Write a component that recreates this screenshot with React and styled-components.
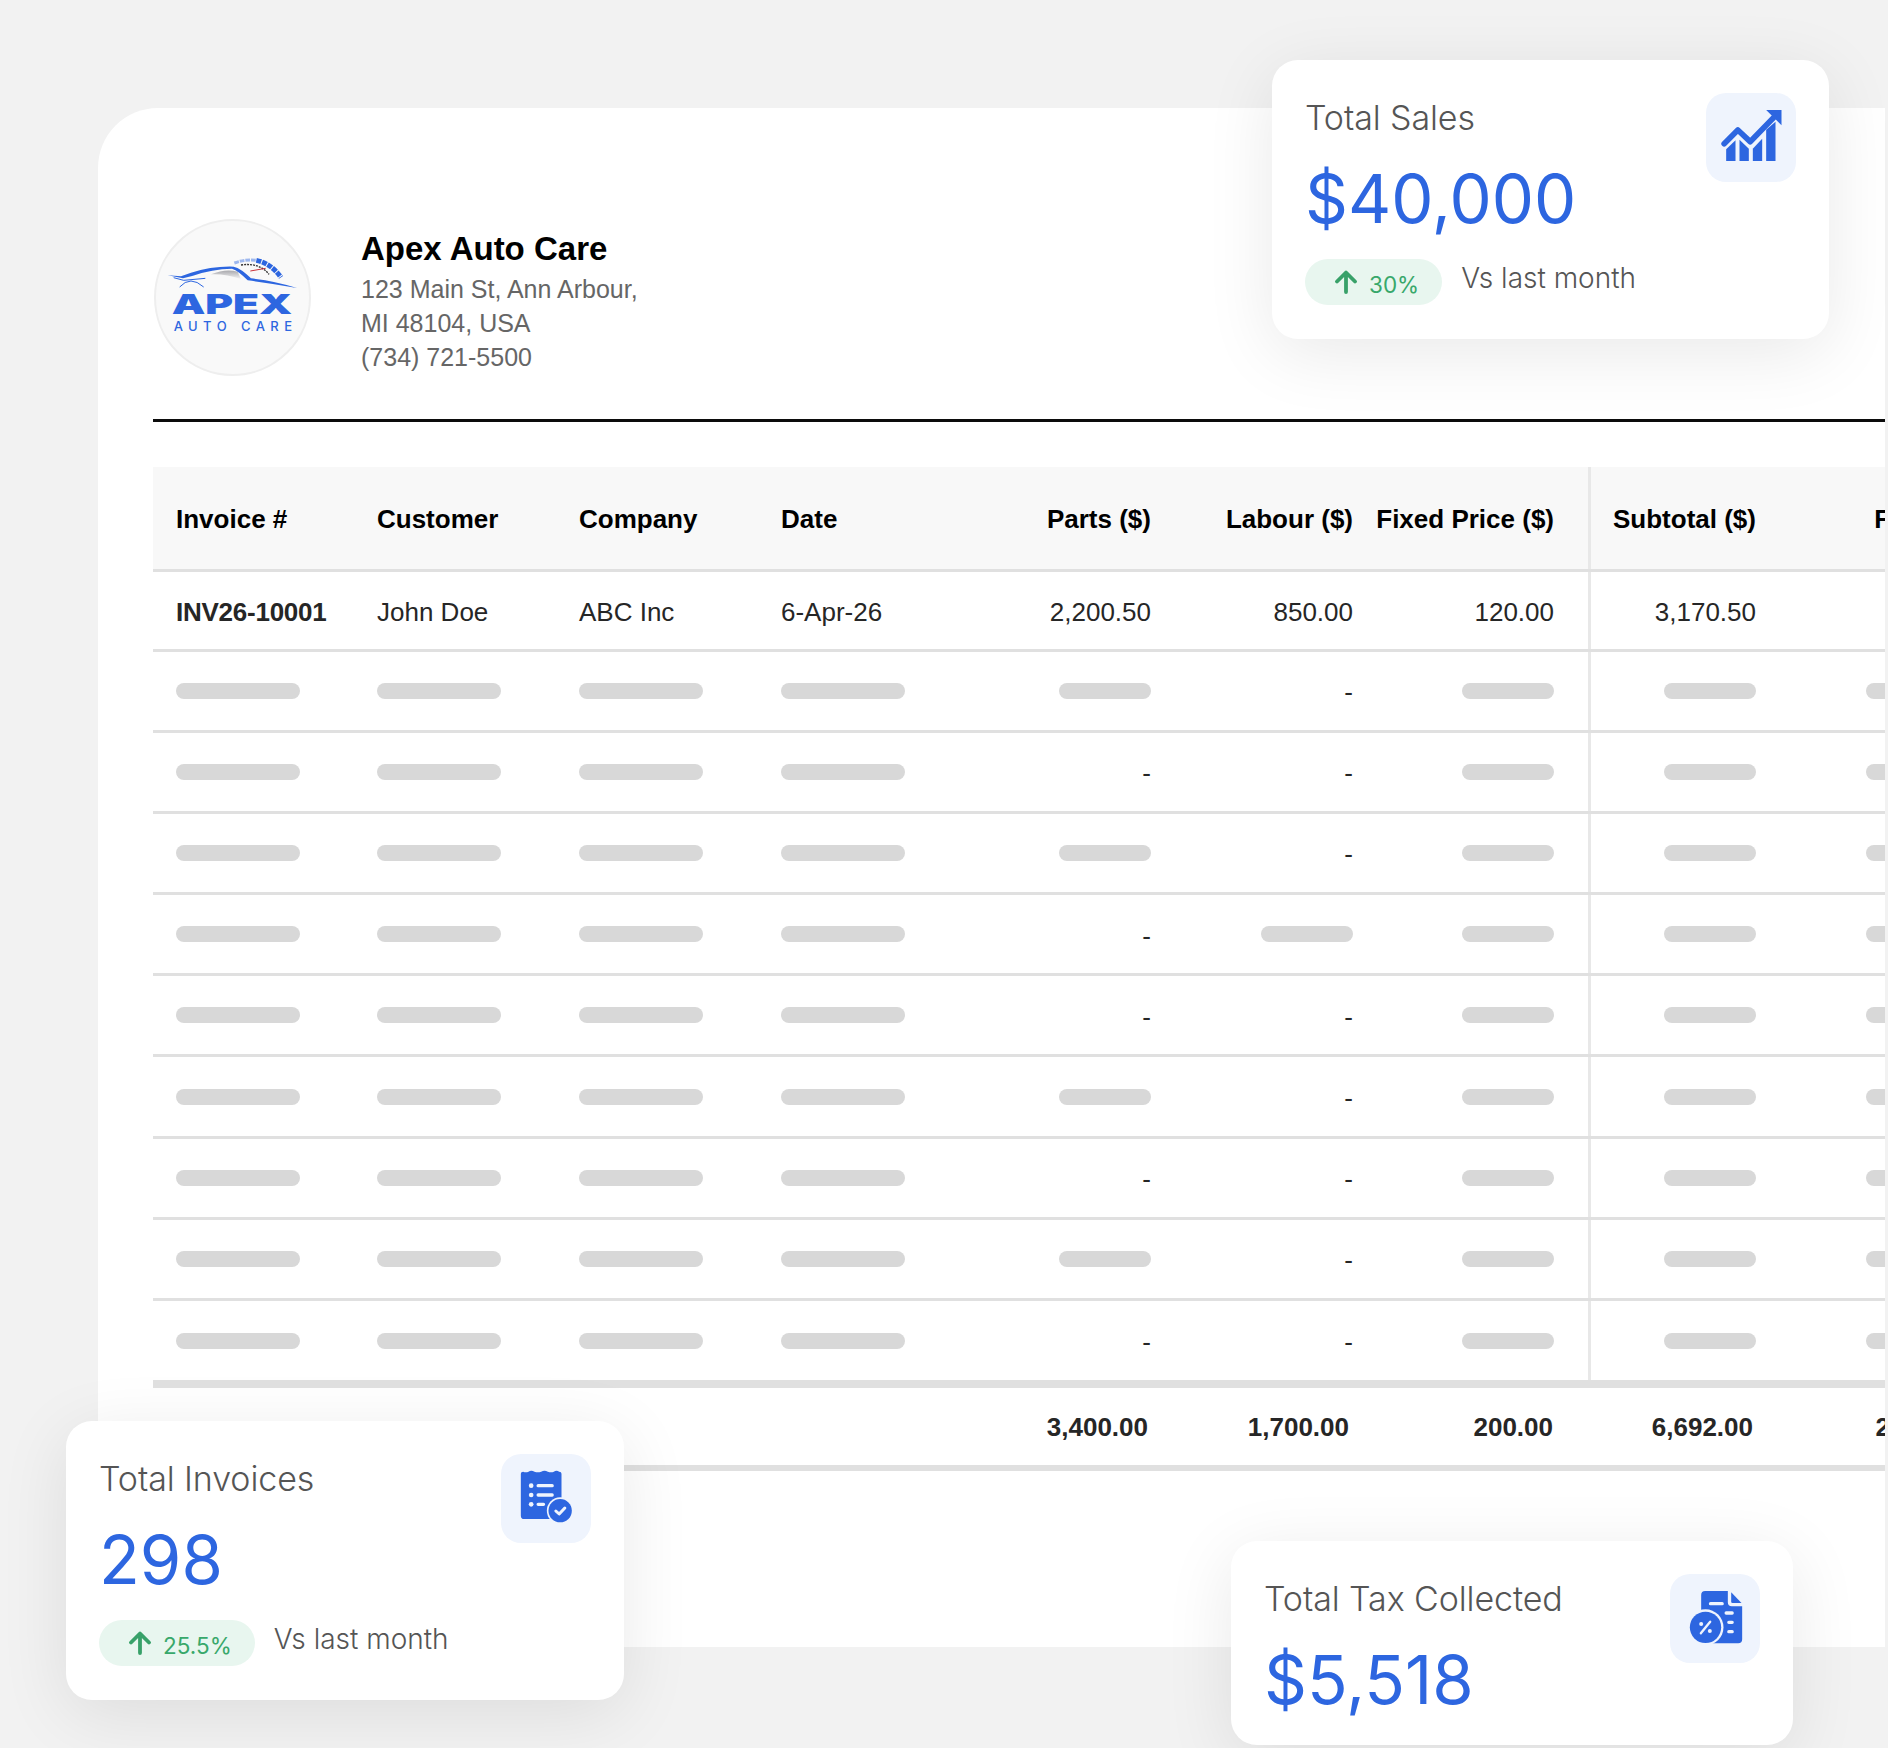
import React from "react";
import styled, { createGlobalStyle } from "styled-components";

const GlobalStyle = createGlobalStyle`
  html, body { margin: 0; padding: 0; background: #f2f2f2; }
  * { box-sizing: border-box; }
`;

const Stage = styled.div`
  position: relative;
  width: 1888px;
  height: 1748px;
  padding: 108px 3px 101px 98px;
  background: #f2f2f2;
  overflow: hidden;
  font-family: "Liberation Sans", Arial, sans-serif;
`;

const Panel = styled.main`
  height: 100%;
  padding: 111px 0 0 55px;
  background: #fff;
  border-radius: 60px 0 0 60px;
  overflow: hidden;
`;

const Header = styled.header`
  display: flex;
  align-items: flex-start;
  gap: 50px;
  height: 203px;
  border-bottom: 3px solid #0c0c0c;
`;

const LogoCircle = styled.div`
  width: 157px;
  height: 157px;
  flex-shrink: 0;
  margin-left: 1px;
  border: 2px solid #eeeeee;
  border-radius: 50%;
  background: #f9f9f9;
  overflow: hidden;

  svg { display: block; width: 100%; height: 100%; }
`;

const Shop = styled.div`
  padding-top: 10px;
`;

const ShopName = styled.h1`
  margin: 0 0 3px;
  font-size: 33px;
  line-height: 40px;
  font-weight: 700;
  color: #000;
`;

const ShopLine = styled.div`
  font-size: 25px;
  line-height: 34px;
  color: #666;
`;

const Table = styled.section`
  width: 1840px;
  margin-top: 45px;
`;

const Row = styled.div`
  display: grid;
  grid-template-columns: 201px 202px 202px 202px 226px 201px 201px 203px 202px;
  height: ${(p) => p.$height}px;
  border-bottom: ${(p) => p.$rule}px solid #e0e0e0;
  background: ${(p) => (p.$head ? "#f8f8f8" : "#fff")};
`;

const Cell = styled.div`
  display: flex;
  align-items: center;
  justify-content: ${(p) => (p.$right ? "flex-end" : "flex-start")};
  padding: ${(p) => p.$nudge ?? 0}px ${(p) => (p.$right ? p.$pad ?? 35 : 0)}px 0 ${(p) => (p.$right ? 0 : 23)}px;
  border-left: ${(p) => (p.$split ? "3px solid #e8e8e8" : "none")};
  font-size: 26px;
  font-weight: ${(p) => (p.$bold ? 700 : 400)};
  color: ${(p) => (p.$black ? "#000" : "#262626")};
  white-space: nowrap;
`;

const InvoiceNo = styled.span`
  letter-spacing: -0.25px;
`;

const Skeleton = styled.span`
  display: block;
  width: ${(p) => p.$width}px;
  height: 16px;
  border-radius: 8px;
  background: #d8d8d8;
`;

const Dash = styled.span`
  margin-top: 4px;
`;

const StatCard = styled.aside`
  position: absolute;
  left: ${(p) => p.$x}px;
  top: ${(p) => p.$y}px;
  width: ${(p) => p.$w}px;
  height: ${(p) => p.$h}px;
  padding: 33px;
  display: flex;
  justify-content: space-between;
  align-items: flex-start;
  background: #fff;
  border-radius: 26px;
  box-shadow: 0 14px 70px rgba(0, 0, 0, 0.09);
  overflow: hidden;
  font-family: Inter, "Liberation Sans", sans-serif;
`;

const StatTitle = styled.div`
  font-size: 34px;
  line-height: 50px;
  font-weight: 300;
  letter-spacing: -0.1px;
  color: #555;
`;

const StatValue = styled.div`
  margin-top: 16px;
  font-size: 67px;
  line-height: 80px;
  font-weight: 400;
  color: #2d66e0;
`;

const Trend = styled.div`
  display: flex;
  align-items: flex-start;
  gap: 19px;
  margin-top: 20px;
`;

const Pill = styled.span`
  display: flex;
  align-items: center;
  gap: 11px;
  height: 46px;
  padding: 4px 23px 0 29px;
  border-radius: 23px;
  background: #e8f6ef;
  font-size: 22.5px;
  color: #38a86b;

  svg { width: 24px; height: 24px; margin-top: -4px; }
`;

const Versus = styled.span`
  font-size: 28px;
  line-height: 38px;
  font-weight: 300;
  color: #555;
`;

const IconBox = styled.div`
  width: 90px;
  height: 89px;
  flex-shrink: 0;
  border-radius: 20px;
  background: #eff4fd;

  svg { display: block; width: 100%; height: 100%; }
`;

const BLUE = "#2d66e0";
const TINT = "#eff4fd";

const ApexLogo = () => (
  <svg viewBox="17 18 459 459">
    <defs>
      <linearGradient id="roofShade" x1="0" y1="0" x2="0" y2="1">
        <stop offset="0" stopColor="#a9a9ad" />
        <stop offset="1" stopColor="#f4f4f5" />
      </linearGradient>
    </defs>
    <path d="M182 178 Q225 160 262 170 L272 192 Q225 176 182 178Z" fill="url(#roofShade)" />
    <path
      d="M52 181 L92 184 L122 173 Q185 153 250 155 Q272 160 302 190 Q375 198 440 219 Q370 206 292 196 Q265 168 245 161 Q185 162 128 182 L98 190 Z"
      fill={BLUE}
    />
    <path d="M70 188 L100 196 L165 190" fill="none" stroke={BLUE} strokeWidth="3" />
    <path d="M88 216 Q120 180 160 216" fill="none" stroke={BLUE} strokeWidth="3" />
    <path d="M252 144 Q285 132 318 136" fill="none" stroke={BLUE} strokeOpacity="0.45" strokeWidth="9" strokeDasharray="14 3" />
    <path d="M318 136 Q362 145 392 187" fill="none" stroke={BLUE} strokeWidth="15" strokeDasharray="15 3" />
    <path d="M272 150 Q328 142 356 178" fill="none" stroke="#333" strokeWidth="4" strokeDasharray="6 3" />
    <path d="M300 168 L346 160" stroke="#c8323a" strokeWidth="3" />
    <text
      x="64"
      y="296"
      textLength="362"
      lengthAdjust="spacingAndGlyphs"
      fontFamily="Inter, sans-serif"
      fontWeight="900"
      fontSize="82"
      fill={BLUE}
    >
      APEX
    </text>
    <text
      x="70"
      y="347"
      textLength="355"
      fontFamily="Inter, sans-serif"
      fontWeight="500"
      fontSize="39"
      fill={BLUE}
    >
      AUTO CARE
    </text>
  </svg>
);

const ChartIcon = () => (
  <svg viewBox="51 24 267 267">
    <g fill={BLUE}>
      <path d="M110 228V193L138 166V228Z" />
      <path d="M150 228V164L178 191V228Z" />
      <path d="M190 228V191L218 161V228Z" />
      <path d="M230 228V134L258 110V228Z" />
      <path d="M230 75H276V121Z" />
    </g>
    <path d="M104 176L145 135L182 170L252 98" fill="none" stroke={BLUE} strokeWidth="17" strokeLinecap="round" strokeLinejoin="round" />
  </svg>
);

const InvoiceIcon = () => (
  <svg viewBox="35 25 267 267">
    <path
      d="M93 84Q93 78 100 78Q108 82 116 78Q124 72 134 78Q144 82 154 78Q164 72 174 78Q184 82 192 78Q200 72 208 78Q215 78 215 84V210Q215 220 205 220H103Q93 220 93 210Z"
      fill={BLUE}
    />
    <g fill="none" stroke={TINT} strokeWidth="10" strokeLinecap="round">
      <path d="M145 120H187M145 148H187M145 176H161" />
    </g>
    <g fill={TINT}>
      <circle cx="124" cy="120" r="7" />
      <circle cx="124" cy="148" r="7" />
      <circle cx="124" cy="176" r="7" />
      <circle cx="211" cy="195" r="40" />
    </g>
    <circle cx="211" cy="195" r="35" fill={BLUE} />
    <path d="M198 196L208 205L225 187" fill="none" stroke={TINT} strokeWidth="9" strokeLinecap="round" strokeLinejoin="round" />
  </svg>
);

const TaxIcon = () => (
  <svg viewBox="30 27 267 267">
    <path d="M134 78H202V112Q202 124 214 124H245V223Q245 235 233 235H134Q122 235 122 223V90Q122 78 134 78Z" fill={BLUE} />
    <path d="M212 82L243 114H216Q212 114 212 110Z" fill={BLUE} />
    <path d="M150 116H185M197 144H215M205 172H215M205 200H215" fill="none" stroke={TINT} strokeWidth="10" strokeLinecap="round" />
    <circle cx="135" cy="187" r="54" fill={TINT} />
    <circle cx="135" cy="187" r="47" fill={BLUE} />
    <path d="M121 205L149 170" stroke={TINT} strokeWidth="7" strokeLinecap="round" />
    <circle cx="122" cy="177" r="6" fill={TINT} />
    <circle cx="148" cy="198" r="6" fill={TINT} />
  </svg>
);

const ArrowUp = () => (
  <svg viewBox="0 0 24 24" fill="none" stroke="#38a169" strokeWidth="3.8" strokeLinecap="round" strokeLinejoin="round">
    <path d="M12 22V3M3 11.5L12 2.5L21 11.5" />
  </svg>
);

const columns = [
  { label: "Invoice #" },
  { label: "Customer" },
  { label: "Company" },
  { label: "Date" },
  { label: "Parts ($)", right: true },
  { label: "Labour ($)", right: true, pad: 34 },
  { label: "Fixed Price ($)", right: true, pad: 34 },
  { label: "Subtotal ($)", right: true, split: true },
  { label: "Fee ($)", right: true },
];

const firstRow = [<InvoiceNo>INV26-10001</InvoiceNo>, "John Doe", "ABC Inc", "6-Apr-26", "2,200.50", "850.00", "120.00", "3,170.50", ""];

// which of parts / labour hold a value, the rest show a dash
const hiddenRows = [
  [true, false],
  [false, false],
  [true, false],
  [false, true],
  [false, false],
  [true, false],
  [false, false],
  [true, false],
  [false, false],
];

const totals = [
  { value: "3,400.00", pad: 38 },
  { value: "1,700.00", pad: 38 },
  { value: "200.00", pad: 35 },
  { value: "6,692.00", pad: 38 },
  { value: "264.00", pad: 38 },
];

const Stat = ({ x, y, w, h, title, value, change, icon }) => (
  <StatCard $x={x} $y={y} $w={w} $h={h}>
    <div>
      <StatTitle>{title}</StatTitle>
      <StatValue>{value}</StatValue>
      {change && (
        <Trend>
          <Pill>
            <ArrowUp />
            {change}
          </Pill>
          <Versus>Vs last month</Versus>
        </Trend>
      )}
    </div>
    <IconBox>{icon}</IconBox>
  </StatCard>
);

export default function App() {
  return (
    <Stage>
      <GlobalStyle />
      <Panel>
        <Header>
          <LogoCircle>
            <ApexLogo />
          </LogoCircle>
          <Shop>
            <ShopName>Apex Auto Care</ShopName>
            <ShopLine>123 Main St, Ann Arbour,</ShopLine>
            <ShopLine>MI 48104, USA</ShopLine>
            <ShopLine>(734) 721-5500</ShopLine>
          </Shop>
        </Header>

        <Table>
          <Row $head $height={104.5} $rule={3}>
            {columns.map((col) => (
              <Cell key={col.label} $right={col.right} $split={col.split} $pad={col.pad} $nudge={4} $bold $black>
                {col.label}
              </Cell>
            ))}
          </Row>

          <Row $height={80} $rule={3}>
            {columns.map((col, i) => (
              <Cell key={col.label} $right={col.right} $split={col.split} $pad={col.pad} $bold={i === 0} $nudge={5}>
                {firstRow[i]}
              </Cell>
            ))}
          </Row>

          {hiddenRows.map(([parts, labour], r) => (
            <Row key={r} $height={r === hiddenRows.length - 1 ? 87 : 81.2} $rule={r === hiddenRows.length - 1 ? 8 : 3}>
              {columns.map((col, i) => {
                const dash = (i === 4 && !parts) || (i === 5 && !labour);
                return (
                  <Cell key={col.label} $right={col.right} $split={col.split} $pad={col.pad}>
                    {dash ? <Dash>-</Dash> : <Skeleton $width={col.right ? 92 : 124} />}
                  </Cell>
                );
              })}
            </Row>
          ))}

          <Row $height={83} $rule={6}>
            {columns.slice(0, 4).map((col) => (
              <Cell key={col.label} />
            ))}
            {totals.map((t, i) => (
              <Cell key={i} $right $bold $pad={t.pad} $nudge={1}>
                {t.value}
              </Cell>
            ))}
          </Row>
        </Table>
      </Panel>

      <Stat x={1272} y={60} w={557} h={279} title="Total Sales" value="$40,000" change="30%" icon={<ChartIcon />} />
      <Stat x={66} y={1421} w={558} h={279} title="Total Invoices" value="298" change="25.5%" icon={<InvoiceIcon />} />
      <Stat x={1231} y={1541} w={562} h={204} title="Total Tax Collected" value="$5,518" icon={<TaxIcon />} />
    </Stage>
  );
}
